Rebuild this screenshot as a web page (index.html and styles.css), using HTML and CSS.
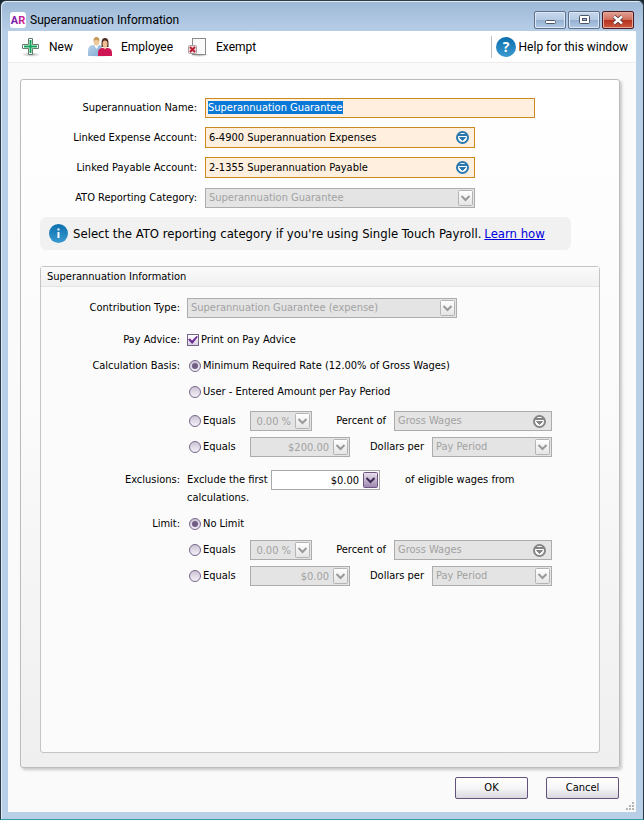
FILE: index.html
```html
<!DOCTYPE html>
<html lang="en">
<head>
<meta charset="utf-8">
<title>Superannuation Information</title>
<link rel="stylesheet" href="styles.css">
</head>
<body>
<svg class="defs" width="0" height="0" aria-hidden="true">
  <defs>
    <linearGradient id="btn" x1="0" y1="0" x2="0" y2="1"><stop offset="0" stop-color="#fff"/><stop offset="1" stop-color="#e4e4e4"/></linearGradient>
    <linearGradient id="btnp" x1="0" y1="0" x2="0" y2="1"><stop offset="0" stop-color="#e9e2ee"/><stop offset="1" stop-color="#9b85ad"/></linearGradient>
    <linearGradient id="blue" x1="0" y1="0" x2="0" y2="1"><stop offset="0" stop-color="#0b6fae"/><stop offset="1" stop-color="#3a9ad0"/></linearGradient>
    <linearGradient id="man" x1="0" y1="0" x2="1" y2="1"><stop offset="0" stop-color="#b9d3ea"/><stop offset="1" stop-color="#7fa9d0"/></linearGradient>
    <linearGradient id="ar" x1="0" y1="0" x2="1" y2="0"><stop offset="0" stop-color="#5a1fb0"/><stop offset="1" stop-color="#e0218a"/></linearGradient>
    <radialGradient id="shade"><stop offset="0" stop-color="#777" stop-opacity=".65"/><stop offset="1" stop-color="#999" stop-opacity="0"/></radialGradient>
    <symbol id="drop" viewBox="0 0 15 16"><rect x=".5" y=".5" width="14" height="15" rx="1" fill="url(#btn)" stroke="#b4b4b4"/><path d="M3.500 6l4 4 4-4" fill="none" stroke="#999" stroke-width="2"/></symbol>
    <symbol id="drop-on" viewBox="0 0 15 16"><rect x=".5" y=".5" width="14" height="15" rx="1" fill="url(#btnp)" stroke="#6d5580"/><path d="M3.500 6l4 4 4-4" fill="none" stroke="#3e2a52" stroke-width="2"/></symbol>
    <symbol id="pick" viewBox="0 0 13 13"><circle cx="6.500" cy="6.500" r="5.500" fill="#fff" stroke="currentColor" stroke-width="2"/><path d="M2 4h9" stroke="currentColor" stroke-width="2"/><path d="M3.500 6.500h6L6.500 9.500z" fill="currentColor" stroke="currentColor" stroke-width="1"/></symbol>
  </defs>
</svg>
<div class="window">
  <header class="titlebar">
    <svg class="logo" width="16" height="16" viewBox="0 0 16 16" aria-hidden="true"><rect width="16" height="16" rx="3" fill="#fff"/><text x="8" y="12" text-anchor="middle" fill="url(#ar)">AR</text></svg>
    <h1>Superannuation Information</h1>
    <div class="controls">
      <button class="wc" aria-label="Minimize"><svg width="14" height="10" viewBox="0 0 14 10"><rect x="2.500" y="5.500" width="10" height="3" rx="1" fill="#fff" stroke="#4c5568"/></svg></button>
      <button class="wc" aria-label="Maximize"><svg width="14" height="10" viewBox="0 0 14 10"><rect x="2.500" y=".5" width="10" height="8" rx="1" fill="#fff" stroke="#4c5568"/><rect x="5.500" y="3.500" width="4" height="2" fill="#9fb9d8" stroke="#4c5568"/></svg></button>
      <button class="wc close" aria-label="Close"><svg width="14" height="10" viewBox="0 0 14 10"><path d="M3 1.500l8 7M11 1.500l-8 7" stroke="#4a3038" stroke-width="4"/><path d="M3 1.500l8 7M11 1.500l-8 7" stroke="#fff" stroke-width="2.400"/></svg></button>
    </div>
  </header>
  <div class="client">
    <nav class="toolbar">
      <button class="tool"><svg width="20" height="20" viewBox="0 0 20 20"><ellipse cx="10" cy="17.500" rx="10" ry="2.500" fill="url(#shade)"/><path d="M7.500 1.500h4v6h6v4h-6v6h-4v-6h-6v-4h6z" fill="#fff" stroke="#63806d"/><path d="M9.500 3v13M3 9.500h13" stroke="#13a35b" stroke-width="2"/></svg>New</button>
      <button class="tool"><svg width="25" height="20" viewBox="0 0 25 20"><ellipse cx="12" cy="18" rx="12" ry="2" fill="url(#shade)"/><path d="M0 19V14q0-6 5-6h6q3 0 3 5v6z" fill="url(#man)"/><path d="M6 8l2.500 4L11 8z" fill="#fff"/><ellipse cx="8.500" cy="4.500" rx="3" ry="4" fill="#edc89b"/><path d="M5.500 4q0-4 3-4t3 4q-3-2-6 0z" fill="#c69a59"/><path d="M10 19v-3q0-5 5-5h4q5 0 5 5v3z" fill="#cf1655"/><path d="M13.500 6q0-5 3.500-5t3.500 5v4h-7z" fill="#4f2a22"/><ellipse cx="17" cy="7" rx="2.500" ry="3.500" fill="#efbd94"/><path d="M15 10.500l2 2 2-2z" fill="#efbd94"/></svg>Employee</button>
      <button class="tool"><svg width="20" height="20" viewBox="0 0 20 20"><ellipse cx="11" cy="18" rx="10" ry="2" fill="url(#shade)"/><rect x="4.500" y="1.500" width="13" height="16" fill="#fafafa" stroke="#8a8a8a"/><rect x=".5" y="8.500" width="8" height="8" rx="1" fill="#f3d9dc" stroke="#a9a3a3"/><path d="M2 10l5 5M7 10l-5 5" stroke="#b82036" stroke-width="2"/></svg>Exempt</button>
      <button class="tool help"><svg width="20" height="20" viewBox="0 0 20 20"><circle cx="10" cy="10" r="10" fill="url(#blue)"/><text x="10" y="15" text-anchor="middle" fill="#fff">?</text></svg>Help for this window</button>
    </nav>
    <main class="content">
      <form class="panel" id="superForm">
        <div class="fields">
          <label for="name">Superannuation Name:</label>
          <input class="box required wide" id="name" type="text" value="Superannuation Guarantee">
          <label for="expense">Linked Expense Account:</label>
          <div class="combo required"><select id="expense"><option>6-4900 Superannuation Expenses</option></select><svg class="pick" width="13" height="13"><use href="#pick"/></svg></div>
          <label for="payable">Linked Payable Account:</label>
          <div class="combo required"><select id="payable"><option>2-1355 Superannuation Payable</option></select><svg class="pick" width="13" height="13"><use href="#pick"/></svg></div>
          <label for="ato">ATO Reporting Category:</label>
          <div class="combo off"><select id="ato" disabled><option>Superannuation Guarantee</option></select><svg width="15" height="16"><use href="#drop"/></svg></div>
        </div>
        <p class="notice">
          <svg width="19" height="19" viewBox="0 0 19 19" aria-hidden="true"><circle cx="9.500" cy="9.500" r="9.500" fill="url(#blue)"/><path d="M9.500 8v6M9.500 4.500v2" stroke="#fff" stroke-width="2"/></svg>
          <span>Select the ATO reporting category if you're using Single Touch Payroll.</span>
          <a href="#">Learn how</a>
        </p>
        <section class="group">
          <h2>Superannuation Information</h2>
          <div class="rows">
            <div class="row first"><label class="caption" for="type">Contribution Type:</label>
              <div class="combo off"><select id="type" disabled><option>Superannuation Guarantee (expense)</option></select><svg width="15" height="16"><use href="#drop"/></svg></div></div>
            <div class="row"><span class="caption">Pay Advice:</span>
              <label class="choice"><input type="checkbox" checked>Print on Pay Advice</label></div>
            <div class="row"><span class="caption">Calculation Basis:</span>
              <label class="choice radio"><input type="radio" name="basis" checked>Minimum Required Rate (12.00% of Gross Wages)</label></div>
            <div class="row user"><span class="caption"></span>
              <label class="choice radio"><input type="radio" name="basis">User - Entered Amount per Pay Period</label></div>
            <div class="row"><span class="caption"></span>
              <div class="line"><label class="choice radio short"><input type="radio" name="basis">Equals</label>
                <div class="combo off pct"><input type="text" value="0.00 %" disabled aria-label="Basis percent"><svg width="15" height="16"><use href="#drop"/></svg></div>
                <label class="unit" for="bw">Percent of</label>
                <div class="combo off wages"><select id="bw" disabled><option>Gross Wages</option></select><svg class="pick" width="13" height="13"><use href="#pick"/></svg></div></div></div>
            <div class="row"><span class="caption"></span>
              <div class="line"><label class="choice radio short"><input type="radio" name="basis">Equals</label>
                <div class="combo off amt"><input type="text" value="$200.00" disabled aria-label="Basis dollars"><svg width="15" height="16"><use href="#drop"/></svg></div>
                <label class="unit" for="bp">Dollars per</label>
                <div class="combo off period"><select id="bp" disabled><option>Pay Period</option></select><svg width="15" height="16"><use href="#drop"/></svg></div></div></div>
            <div class="row exclusion"><span class="caption">Exclusions:</span>
              <div class="line"><label class="before" for="ex">Exclude the first</label>
                <div class="combo exc"><input id="ex" type="text" value="$0.00"><svg width="15" height="16"><use href="#drop-on"/></svg></div>
                <span class="after">of eligible wages from</span></div></div>
            <div class="row tail"><span class="caption"></span><span>calculations.</span></div>
            <div class="row"><span class="caption">Limit:</span>
              <label class="choice radio"><input type="radio" name="limit" checked>No Limit</label></div>
            <div class="row"><span class="caption"></span>
              <div class="line"><label class="choice radio short"><input type="radio" name="limit">Equals</label>
                <div class="combo off pct"><input type="text" value="0.00 %" disabled aria-label="Limit percent"><svg width="15" height="16"><use href="#drop"/></svg></div>
                <label class="unit" for="lw">Percent of</label>
                <div class="combo off wages"><select id="lw" disabled><option>Gross Wages</option></select><svg class="pick" width="13" height="13"><use href="#pick"/></svg></div></div></div>
            <div class="row"><span class="caption"></span>
              <div class="line"><label class="choice radio short"><input type="radio" name="limit">Equals</label>
                <div class="combo off amt"><input type="text" value="$0.00" disabled aria-label="Limit dollars"><svg width="15" height="16"><use href="#drop"/></svg></div>
                <label class="unit" for="lp">Dollars per</label>
                <div class="combo off period"><select id="lp" disabled><option>Pay Period</option></select><svg width="15" height="16"><use href="#drop"/></svg></div></div></div>
          </div>
        </section>
      </form>
    </main>
    <footer class="actions">
      <button class="action" form="superForm" type="button">OK</button>
      <button class="action" form="superForm" type="button">Cancel</button>
      <svg class="grip" width="8" height="8" viewBox="0 0 8 8" aria-hidden="true"><path d="M6 0h2v2H6zM3 3h2v2H3zM6 3h2v2H6zM0 6h2v2H0zM3 6h2v2H3zM6 6h2v2H6z" fill="#b5b5b5"/></svg>
    </footer>
  </div>
</div>
<script src="app.js"></script>
</body>
</html>
```
FILE: styles.css
```css
* { box-sizing: border-box; }

body {
  margin: 0;
  background: #16262c;
  color: #000;
  font: 11px/14px Tahoma, "DejaVu Sans Condensed", "Noto Sans", sans-serif;
}

button, input, select { font: inherit; color: inherit; margin: 0; }
.defs { position: absolute; }

.window {
  display: flex;
  flex-direction: column;
  min-height: 100vh;
  padding: 0 7px 7px;
  border: 1px solid #2b3a44;
  border-bottom-color: #2ea0a8;
  border-radius: 6px 6px 0 0;
  background: linear-gradient(#9cb8d6, #b9cfe8 32px, #b9cfe8);
  box-shadow: inset 1px 1px #dfeaf5;
}

.titlebar {
  display: flex;
  align-items: center;
  height: 30px;
  padding: 7px 2px 0;
}
.logo text { font: bold 11px Roboto, sans-serif; }
.titlebar h1 {
  margin: 0 0 0 4px;
  font: 12px/16px Roboto, sans-serif;
}
.controls { display: flex; gap: 2px; margin-left: auto; }
.wc {
  display: flex;
  align-items: center;
  justify-content: center;
  width: 32px;
  height: 18px;
  padding: 0;
  border: 1px solid #5d718c;
  border-radius: 2px;
  background: linear-gradient(#c7d8ec, #b4c9e2 50%, #93afd0 50%, #b3cae5);
  box-shadow: inset 0 0 0 1px #dce8f5;
}
.close {
  border-color: #4a1a20;
  background: linear-gradient(#e3a195, #cf6b58 50%, #b5301c 50%, #cc5a40);
  box-shadow: inset 0 0 0 1px #e6a79b;
}

.client {
  display: flex;
  flex: 1;
  flex-direction: column;
  background: #fafafa;
}
.toolbar {
  display: flex;
  align-items: center;
  gap: 15px;
  height: 32px;
  padding: 0 8px 0 13px;
  border-bottom: 1px solid #ececec;
  background: #fff;
}
.tool {
  display: flex;
  align-items: center;
  gap: 8px;
  padding: 0;
  border: 0;
  background: none;
  font: 12px/16px Roboto, sans-serif;
}
.help {
  gap: 3px;
  height: 22px;
  margin-left: auto;
  padding-left: 4px;
  border-left: 1px solid #c4bcc4;
}
.help text { font: bold 14px "Open Sans", sans-serif; }

.content {
  display: flex;
  flex: 1;
  padding: 16px 16px 0 12px;
}
.panel {
  display: flex;
  flex: 1;
  flex-direction: column;
  padding: 17px 19px 14px;
  border: 1px solid #bcbcbc;
  border-radius: 3px;
  background: linear-gradient(#fff, #fafafa 50%, #efefef);
  box-shadow: 2px 2px 3px #c8c8c8;
}

.fields {
  display: grid;
  grid-template-columns: 157px 1fr;
  grid-auto-rows: 21px;
  gap: 9px 8px;
  align-items: center;
}
.fields > label { text-align: right; }

.box, .combo {
  height: 20px;
  border: 1px solid #a9a9a9;
  background: #fff;
}
.fields .required { border-color: #cd8a1f; background: #feefdf; }
.wide { width: 330px; padding: 0 2px; }
.wide::selection { background: #0a78d6; color: #fff; }
.box:focus, .combo :focus { outline: 0; }
.combo {
  display: flex;
  align-items: center;
  flex: none;
  width: 270px;
  padding-right: 1px;
}
.fields .combo.required { height: 21px; }
.combo select, .combo input {
  flex: 1;
  min-width: 0;
  height: 18px;
  padding: 0 3px;
  border: 0;
  background: none;
  appearance: none;
  opacity: 1;
}
.combo input { text-align: right; padding-right: 4px; }
.combo svg { flex: none; }
.combo .pick { margin-right: 4px; color: #2b78ae; }
.off { border-color: #acacac; background: #e4e4e4; color: #a2a2a2; }
.off .pick { color: #858585; }

.notice {
  display: flex;
  align-items: center;
  gap: 5px;
  width: 531px;
  max-width: 100%;
  height: 33px;
  margin: 9px 0 16px;
  padding: 0 9px;
  border-radius: 6px;
  background: #f1f1f1;
  font-size: 13px;
  line-height: 16px;
  white-space: nowrap;
}
.notice a { color: #00d; margin-left: -2px; }

.group {
  flex: 1;
  border: 1px solid #c4c4c4;
  border-radius: 3px;
  background: #fbfbfb;
}
.group h2 {
  margin: 0;
  padding: 3px 6px 2px;
  border-bottom: 1px solid #e4e4e4;
  background: linear-gradient(#fafafa, #f0f0f0);
  font-size: 11px;
  font-weight: normal;
}
.rows { padding-top: 10px; }
.row {
  display: flex;
  align-items: center;
  gap: 7px;
  height: 26px;
}
.row.first { height: 22px; margin-bottom: 8px; }
.caption { flex: none; width: 139px; text-align: right; }
.line { display: flex; align-items: center; width: 365px; }
.choice { display: flex; align-items: center; gap: 2px; white-space: nowrap; }
.radio { padding-left: 2px; }
.short { width: 63px; }
.choice input {
  display: grid;
  place-content: center;
  flex: none;
  width: 12px;
  height: 12px;
  border: 1px solid #75658a;
  appearance: none;
  background: linear-gradient(#fff, #d8cfe2);
}
.choice input[type="radio"] { border-radius: 50%; background: linear-gradient(#cbc4d4, #f4f0f8); }
.choice input[type="radio"]:checked::before {
  content: "";
  width: 6px;
  height: 6px;
  border-radius: 50%;
  background: #6f5d83;
}
.choice input[type="checkbox"]:checked::before {
  content: "";
  width: 10px;
  height: 8px;
  background: #6b2a8f;
  clip-path: polygon(0 45%, 20% 30%, 40% 60%, 85% 0, 100% 10%, 42% 100%);
}
.pct { width: 62px; }
.amt { width: 100px; }
.wages { width: 158px; }
.period { width: 120px; }
.exc { width: 109px; }
.unit { flex: 1; padding-right: 8px; text-align: right; }
.row.user { margin-bottom: 3px; }
.exclusion { margin-top: 7px; }
.before { width: 84px; white-space: nowrap; }
.after { margin-left: 25px; white-space: nowrap; }
.row.tail { height: 14px; margin: -2px 0 6px; }

.actions {
  position: relative;
  display: flex;
  justify-content: flex-end;
  gap: 18px;
  padding: 9px 17px 13px;
}
.action {
  width: 73px;
  height: 22px;
  padding: 0;
  border: 1px solid #62527c;
  border-radius: 2px;
  background: linear-gradient(#fff, #f6f6f8 50%, #d8d8de);
}
.grip { position: absolute; right: 2px; bottom: 2px; }
```
FILE: app.js
```js
document.getElementById("name").select();
```
